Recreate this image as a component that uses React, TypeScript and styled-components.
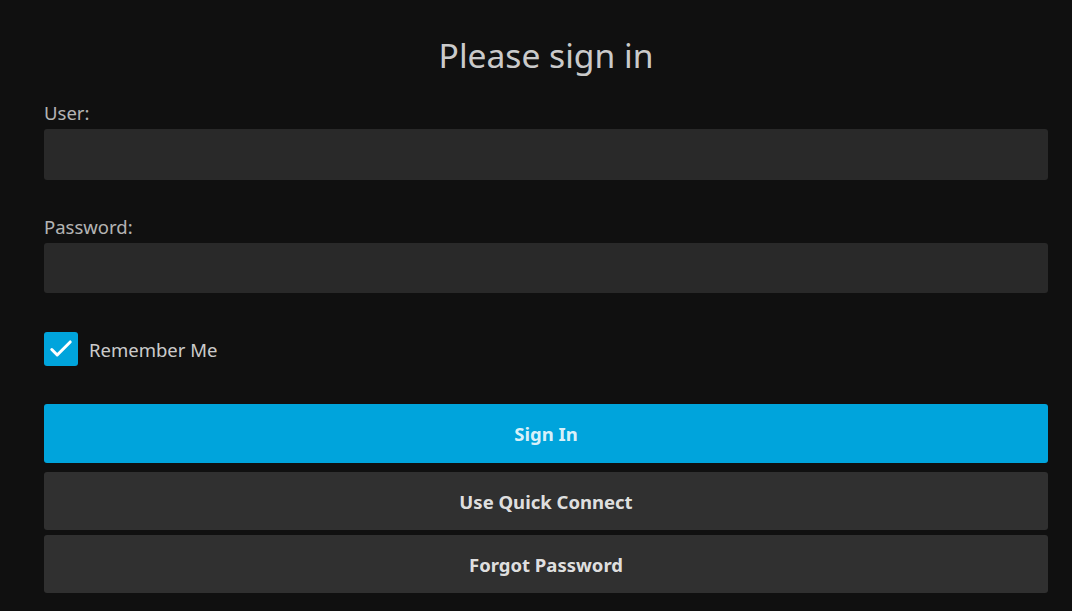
import styled, { createGlobalStyle } from "styled-components";

const GlobalStyle = createGlobalStyle`
  html, body {
    margin: 0;
    padding: 0;
    background: #101010;
    color: rgba(255, 255, 255, 0.8);
    font-family: "Noto Sans", "Open Sans", sans-serif;
  }
  * { box-sizing: border-box; }
`;

const Page = styled.div`
  padding: 0 24px 0 44px;
  min-height: 611px;
`;

const Form = styled.form`
  width: 1004px;
  display: flex;
  flex-direction: column;
`;

const Title = styled.h1`
  margin: 0;
  padding-top: 32px;
  text-align: center;
  font-weight: 400;
  font-size: 33.6px;
  line-height: 46px;
  color: rgba(255, 255, 255, 0.8);
`;

const Field = styled.div<{ $gap: number }>`
  display: flex;
  flex-direction: column;
  margin-top: ${(p) => p.$gap}px;
`;

const Label = styled.label`
  font-size: 18.5px;
  line-height: 24px;
  margin-bottom: 4px;
  color: rgba(255, 255, 255, 0.7);
`;

const Input = styled.input<{ $h: number }>`
  height: ${(p) => p.$h}px;
  border: none;
  outline: none;
  border-radius: 3px;
  background: #292929;
  color: #fff;
  font: inherit;
  padding: 0 12px;
`;

const CheckRow = styled.label`
  display: flex;
  align-items: center;
  gap: 11px;
  margin-top: 39px;
  font-size: 18.5px;
  color: rgba(255, 255, 255, 0.8);
`;

const Box = styled.span`
  width: 34px;
  height: 34px;
  border-radius: 3px;
  background: #00a4dc;
  display: flex;
  align-items: center;
  justify-content: center;
`;

const Button = styled.button<{ $primary?: boolean; $gap: number; $h?: number }>`
  height: ${(p) => p.$h ?? 58}px;
  margin-top: ${(p) => p.$gap}px;
  border: none;
  border-radius: 3px;
  background: ${(p) => (p.$primary ? "#00a4dc" : "#303030")};
  color: rgba(255, 255, 255, 0.87);
  font-family: inherit;
  font-weight: 700;
  font-size: 18.5px;
  cursor: pointer;
`;

export default function App() {
  return (
    <>
      <GlobalStyle />
      <Page>
        <Form onSubmit={(e) => e.preventDefault()}>
          <Title>Please sign in</Title>
          <Field $gap={23}>
            <Label>User:</Label>
            <Input type="text" $h={51} />
          </Field>
          <Field $gap={35}>
            <Label>Password:</Label>
            <Input type="password" $h={50} />
          </Field>
          <CheckRow>
            <Box>
              <svg width="26" height="26" viewBox="0 0 24 24" fill="none">
                <path d="M3.5 12.5l5 5L20.5 5.5" stroke="#fff" strokeWidth="2.8" strokeLinecap="round" strokeLinejoin="round" />
              </svg>
            </Box>
            Remember Me
          </CheckRow>
          <Button type="submit" $primary $gap={38} $h={59}>Sign In</Button>
          <Button type="button" $gap={9}>Use Quick Connect</Button>
          <Button type="button" $gap={5}>Forgot Password</Button>
        </Form>
      </Page>
    </>
  );
}
